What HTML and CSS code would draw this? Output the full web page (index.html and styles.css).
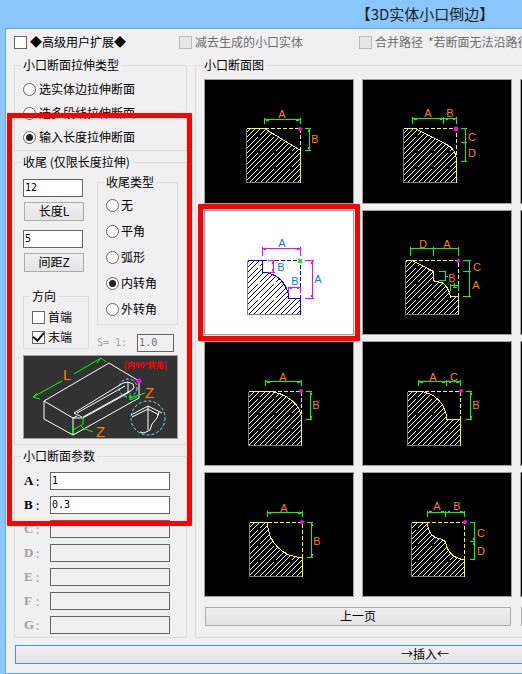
FILE: index.html
```
<!DOCTYPE html>
<html lang="zh-CN">
<head>
    <meta charset="UTF-8">
    <title>【3D实体小口倒边】</title>
    <link rel="stylesheet" href="styles.css">
</head>
<body>
<div class="dialog">
    <h1 class="title">【3D实体小口倒边】</h1>
    <main class="client">
        <div class="options">
            <label class="check"><input type="checkbox">◆高级用户扩展◆</label>
            <label class="check disabled"><input type="checkbox" disabled>减去生成的小口实体</label>
            <label class="check disabled"><input type="checkbox" disabled>合并路径</label>
            <span class="hint">*若断面无法沿路径</span>
        </div>

        <div class="columns">
            <div class="settings">
                <fieldset class="extrude">
                    <legend>小口断面拉伸类型</legend>
                    <label class="check"><input type="radio" name="extrude">选实体边拉伸断面</label>
                    <label class="check"><input type="radio" name="extrude">选多段线拉伸断面</label>
                    <label class="check"><input type="radio" name="extrude" checked>输入长度拉伸断面</label>
                </fieldset>

                <fieldset class="ending">
                    <legend>收尾 (仅限长度拉伸)</legend>
                    <div class="ending-row">
                        <div class="ending-left">
                            <input class="field" type="text" value="12" aria-label="长度L">
                            <button class="btn" type="button">长度L</button>
                            <input class="field second" type="text" value="5" aria-label="间距Z">
                            <button class="btn" type="button">间距Z</button>
                            <fieldset class="direction">
                                <legend>方向</legend>
                                <label class="check"><input type="checkbox">首端</label>
                                <label class="check"><input type="checkbox" checked>末端</label>
                            </fieldset>
                        </div>
                        <div class="ending-right">
                            <fieldset class="end-type">
                                <legend>收尾类型</legend>
                                <label class="check"><input type="radio" name="end">无</label>
                                <label class="check"><input type="radio" name="end">平角</label>
                                <label class="check"><input type="radio" name="end">弧形</label>
                                <label class="check"><input type="radio" name="end" checked>内转角</label>
                                <label class="check"><input type="radio" name="end">外转角</label>
                            </fieldset>
                            <div class="scale">
                                <label for="scale">S= 1:</label>
                                <input class="field" id="scale" type="text" value="1.0" disabled>
                            </div>
                        </div>
                    </div>
                    <svg class="preview" viewBox="0 0 155 84">
                        <g class="solid">
                            <path d="M21 46 86 8 116 26V43L50 80 21 64V46L50 63V80"/>
                            <path d="M50 63 60 63 105 38"/>
                            <path d="M51 58 100 28 105 27 110 29 111 33 105 38V27"/>
                            <path d="M51 58 59 62M54 58 102 31M60 62 107 36M50 63 54 61"/>
                            <path d="M108 60 125 51 139 58M109 62 125 54 136 60M125 51V75M136 57 134 63 129 69 127 75 121 78 117 77"/>
                        </g>
                        <g class="lens">
                            <circle cx="105" cy="33" r="9"/>
                            <circle cx="125" cy="63" r="17"/>
                        </g>
                        <g class="measure">
                            <path d="M10 42 39 26M51 19 78 3M10 42 17 44M10 42 14 38M78 3 83 7M78 3 74 8"/>
                            <path d="M107 38V45L114 42M107 43 122 38M50 75 60 69V62M50 70V79M60 73 70 77M58 71 62 75"/>
                        </g>
                        <g class="big-letters">
                            <text x="40" y="25">L</text>
                            <text x="122" y="43">Z</text>
                            <text x="73" y="82">Z</text>
                        </g>
                        <text class="caption" x="101" y="13">[内90°转角]</text>
                        <circle class="base" cx="116" cy="26" r="2.5"/>
                    </svg>
                </fieldset>

                <fieldset class="params">
                    <legend>小口断面参数</legend>
                    <div class="param"><label for="pa"><b>A</b>:</label><input class="field" id="pa" type="text" value="1"></div>
                    <div class="param"><label for="pb"><b>B</b>:</label><input class="field" id="pb" type="text" value="0.3"></div>
                    <div class="param disabled"><label for="pc"><b>C</b>:</label><input class="field" id="pc" type="text" disabled></div>
                    <div class="param disabled"><label for="pd"><b>D</b>:</label><input class="field" id="pd" type="text" disabled></div>
                    <div class="param disabled"><label for="pe"><b>E</b>:</label><input class="field" id="pe" type="text" disabled></div>
                    <div class="param disabled"><label for="pf"><b>F</b>:</label><input class="field" id="pf" type="text" disabled></div>
                    <div class="param disabled"><label for="pg"><b>G</b>:</label><input class="field" id="pg" type="text" disabled></div>
                </fieldset>
                <div class="mark mark-settings"></div>
            </div>

            <fieldset class="profiles">
                <legend>小口断面图</legend>
                <div class="grid">
                    <button class="cell" type="button" aria-label="倒角">
                        <svg viewBox="1 1 148 123">
                            <defs>
                                <pattern id="hatch" width="16" height="16" patternUnits="userSpaceOnUse">
                                    <path class="hatch-line" d="M-1 6 6 -1M-1 11 11 -1M-1 17 6 10M8 8 17 -1M4 17 17 4M9 17 17 9"/>
                                </pattern>
                                <pattern id="hatch-dark" width="16" height="16" patternUnits="userSpaceOnUse">
                                    <path class="hatch-line dark" d="M-1 6 6 -1M-1 11 11 -1M-1 17 6 10M8 8 17 -1M4 17 17 4M9 17 17 9"/>
                                </pattern>
                            </defs>
                            <path class="fill" d="M42.5 49.5H60.5L96.5 71.5V103.5H42.5Z"/>
                            <path class="side" d="M42.5 49.5V103.5H96.5"/>
                            <path class="edge" d="M42.5 49.5H60.5L96.5 71.5V103.5"/>
                            <path class="cut" d="M96.5 71.5V49.5H60.5"/>
                            <path class="measure" d="M60.5 39V45M96.5 39V45M60.5 40.5H96.5M101 49.5H107M101 71.5H107M105.5 49.5V71.5M62 41.5H65M92 41.5H95M104.5 51V53M104.5 68V70"/>
                            <text x="78" y="39">A</text>
                            <text x="111" y="64">B</text>
                            <circle class="base" cx="96" cy="50" r="2"/>
                        </svg>
                    </button>
                    <button class="cell" type="button" aria-label="斜边圆角">
                        <svg viewBox="1 1 148 123">
                            <path class="fill" d="M41.5 49.5H53L84 65Q94.5 70 94.5 82V103.5H41.5Z"/>
                            <path class="side" d="M41.5 49.5V103.5H94.5"/>
                            <path class="edge" d="M41.5 49.5H53L84 65Q94.5 70 94.5 82V103.5"/>
                            <path class="cut" d="M94.5 76V49.5H53"/>
                            <path class="measure" d="M50.5 38V45M81.5 38V45M94.5 38V45M50.5 39.5H94.5M99 49.5H105M99 63.5H105M99 82.5H105M103.5 49.5V82.5M52 40.5H55M78 40.5H80M84 40.5H86M91 40.5H93"/>
                            <text x="66" y="38">A</text>
                            <text x="88" y="38">B</text>
                            <text x="110" y="62">C</text>
                            <text x="110" y="78">D</text>
                            <rect class="base" x="92" y="48" width="4" height="4"/>
                        </svg>
                    </button>
                    <button class="cell" type="button"></button>
                    <button class="cell" type="button"></button>

                    <button class="cell selected" type="button" aria-label="凸圆双台阶">
                        <svg viewBox="1 1 148 123">
                            <path class="fill" d="M43.5 50.5H58.5V62.5A26 26 0 0 1 84.5 88.5H96.5V104.5H43.5Z"/>
                            <path class="side" d="M43.5 50.5V104.5H96.5"/>
                            <path class="edge" d="M43.5 50.5H58.5V62.5A26 26 0 0 1 84.5 88.5H96.5V104.5"/>
                            <path class="cut" d="M96.5 88.5V50.5H58.5"/>
                            <path class="measure" d="M58.5 37V46M96.5 37V46M58.5 38.5H96.5M101 50.5H110M101 88.5H110M108.5 50.5V88.5M64 50.5H71M64 62.5H71M69.5 50.5V62.5M84.5 77V83M96.5 77V83M84.5 77.5H96.5M60 39.5H62M93 39.5H95M107.5 52V54M107.5 85V87M68.5 52V54M68.5 59V61M86 78.5H88M93 78.5H95"/>
                            <text x="78" y="37">A</text>
                            <text x="77" y="61">B</text>
                            <text x="91" y="75">B</text>
                            <text x="114" y="73">A</text>
                            <rect class="base" x="94" y="49" width="4" height="4"/>
                        </svg>
                        <span class="mark mark-cell"></span>
                    </button>
                    <button class="cell" type="button" aria-label="斜边台阶圆角">
                        <svg viewBox="1 1 148 123">
                            <path class="fill" d="M43.5 50.5H50L71.5 61.5V70.5L81 73Q87 78 88.5 86.5H96.5V104.5H43.5Z"/>
                            <path class="side" d="M43.5 50.5V104.5H96.5"/>
                            <path class="edge" d="M43.5 50.5H50L71.5 61.5V70.5L81 73Q87 78 88.5 86.5H96.5V104.5"/>
                            <path class="cut" d="M96.5 86.5V50.5H50"/>
                            <path class="measure" d="M48.5 37V46M71.5 37V46M96.5 37V46M48.5 38.5H96.5M101 50.5H109M101 61.5H109M101 86.5H109M107.5 50.5V86.5M77 61.5H84M77 70.5H84M83.5 61.5V70.5M84 66.5H86M88.5 74V81M96.5 74V81M88.5 75.5H96.5M91 77.5H95M92.5 73V77"/>
                            <text x="61" y="38">D</text>
                            <text x="85" y="38">A</text>
                            <text x="90" y="72">B</text>
                            <text x="115" y="61">C</text>
                            <text x="114" y="79">A</text>
                            <circle class="base" cx="96" cy="51" r="2"/>
                        </svg>
                    </button>
                    <button class="cell" type="button"></button>
                    <button class="cell" type="button"></button>

                    <button class="cell" type="button" aria-label="外圆角">
                        <svg viewBox="1 1 148 123">
                            <path class="fill" d="M44.5 50.5H61.5A36 28 0 0 1 97.5 78.5V104.5H44.5Z"/>
                            <path class="side" d="M44.5 50.5V104.5H97.5"/>
                            <path class="edge" d="M44.5 50.5H61.5A36 28 0 0 1 97.5 78.5V104.5"/>
                            <path class="cut" d="M97.5 78.5V50.5H67"/>
                            <path class="measure" d="M61.5 39V45M97.5 39V45M61.5 40.5H97.5M102 50.5H108M102 78.5H108M106.5 50.5V78.5M63 41.5H66M93 41.5H96M107.5 52V54M107.5 75V77"/>
                            <text x="79" y="40">A</text>
                            <text x="112" y="68">B</text>
                            <circle class="base" cx="97" cy="50" r="2"/>
                        </svg>
                    </button>
                    <button class="cell" type="button" aria-label="圆角台阶">
                        <svg viewBox="1 1 148 123">
                            <path class="fill" d="M45.5 50.5H56.5A28 28 0 0 1 84.5 78.5H98.5V104.5H45.5Z"/>
                            <path class="side" d="M45.5 50.5V104.5H98.5"/>
                            <path class="edge" d="M45.5 50.5H56.5A28 28 0 0 1 84.5 78.5H98.5V104.5"/>
                            <path class="cut" d="M98.5 78.5V50.5H62"/>
                            <path class="measure" d="M56.5 39V45M84.5 39V45M98.5 39V45M56.5 40.5H98.5M104 50.5H110M104 78.5H110M108.5 50.5V78.5M58 41.5H61M80 41.5H83M87 41.5H89M94 41.5H97M109.5 52V54M109.5 75V77"/>
                            <text x="71" y="40">A</text>
                            <text x="92" y="40">C</text>
                            <text x="114" y="68">B</text>
                            <circle class="base" cx="99" cy="50" r="2"/>
                        </svg>
                    </button>
                    <button class="cell" type="button"></button>
                    <button class="cell" type="button"></button>

                    <button class="cell" type="button" aria-label="内圆角">
                        <svg viewBox="1 1 148 123">
                            <path class="fill" d="M45.5 50.5H63.5A35 35 0 0 0 98.5 85.5V104.5H45.5Z"/>
                            <path class="side" d="M45.5 50.5V104.5H98.5"/>
                            <path class="edge" d="M45.5 50.5H63.5A35 35 0 0 0 98.5 85.5V104.5"/>
                            <path class="cut" d="M98.5 85.5V50.5H63.5"/>
                            <path class="measure" d="M63.5 39V45M98.5 39V45M63.5 40.5H98.5M103 50.5H109M103 85.5H109M107.5 50.5V85.5M65 41.5H67M94 41.5H97M108.5 52V54M108.5 82V84"/>
                            <text x="80" y="40">A</text>
                            <text x="113" y="73">B</text>
                            <circle class="base" cx="98" cy="50" r="2"/>
                        </svg>
                    </button>
                    <button class="cell" type="button" aria-label="双内圆角">
                        <svg viewBox="1 1 148 123">
                            <path class="fill" d="M49.5 50.5H65.5Q66 65 79 67L83.5 69.5Q86 86 102.5 87.5V104.5H49.5Z"/>
                            <path class="side" d="M49.5 50.5V104.5H102.5"/>
                            <path class="edge" d="M49.5 50.5H65.5Q66 65 79 67L83.5 69.5Q86 86 102.5 87.5V104.5"/>
                            <path class="cut" d="M102.5 87.5V50.5H65.5"/>
                            <path class="measure" d="M65.5 39V45M83.5 39V45M102.5 39V45M65.5 40.5H102.5M108 50.5H113M108 69.5H113M108 87.5H113M112.5 50.5V87.5M67 39.5H70M79 39.5H82M86 39.5H88M98 39.5H101M111.5 66V68M111.5 71V73"/>
                            <text x="75" y="38">A</text>
                            <text x="95" y="38">B</text>
                            <text x="119" y="65">C</text>
                            <text x="119" y="83">D</text>
                            <circle class="base" cx="103" cy="50" r="2"/>
                        </svg>
                    </button>
                    <button class="cell" type="button"></button>
                    <button class="cell" type="button"></button>
                </div>
                <div class="pager">
                    <button class="btn" type="button">上一页</button>
                    <button class="btn" type="button">下一页</button>
                </div>
            </fieldset>
        </div>

        <button class="btn insert" type="submit">→插入←</button>
    </main>
</div>
</body>
</html>
```
FILE: styles.css
```
* {
    box-sizing: border-box;
}

html {
    overflow-x: hidden;
}

body {
    margin: 0;
    min-height: 100vh;
    overflow-x: hidden;
    background-color: #8ac6fb;
    font-family: "Noto Sans CJK SC", sans-serif;
    font-size: 12px;
    line-height: 14px;
    color: #000;
}

.dialog {
    min-width: 850px;
    padding: 0 5px;
}

.title {
    margin: 0;
    font-size: 15px;
    font-weight: normal;
    line-height: 28px;
    text-align: center;
    color: #222;
}

.client {
    display: flex;
    flex-direction: column;
    padding: 5px 8px 9px;
    background-color: #f0f0f0;
    border: 1px solid #6ca6da;
}

/* Checkboxes and radios */
.check {
    display: flex;
    align-items: center;
    gap: 3px;
    white-space: nowrap;
}

.check input {
    appearance: none;
    flex: none;
    display: grid;
    place-items: center;
    width: 13px;
    height: 13px;
    margin: 0;
    background-color: #fff;
    border: 1px solid #666;
}

.check input[type="radio"] {
    border-radius: 50%;
}

.check input[type="radio"]:checked::before {
    content: "";
    width: 7px;
    height: 7px;
    border-radius: 50%;
    background-color: #222;
}

.check input[type="checkbox"]:checked::before {
    content: "";
    width: 9px;
    height: 5px;
    margin-bottom: 3px;
    border: solid #111;
    border-width: 0 0 2px 2px;
    transform: rotate(-50deg);
}

.check input:disabled {
    background-color: #e6e6e6;
    border-color: #bcbcbc;
}

.disabled,
.hint {
    color: #6d6d6d;
}

.options {
    display: grid;
    grid-template-columns: 165px 180px auto 1fr;
    align-items: center;
    height: 16px;
    margin-bottom: 8px;
}

.hint {
    margin-left: 5px;
    white-space: nowrap;
}

/* Group boxes */
fieldset {
    min-width: 0;
    margin: 0;
    padding: 0 8px;
    border: 1px solid #dcdcdc;
}

legend {
    padding: 0 2px;
    margin-left: -2px;
    white-space: nowrap;
}

.columns {
    display: flex;
    gap: 8px;
}

.settings {
    position: relative;
    flex: none;
    display: flex;
    flex-direction: column;
    gap: 4px;
    width: 173px;
}

.extrude {
    padding-top: 5px;
    padding-bottom: 1px;
}

.extrude .check {
    height: 24px;
}

.ending {
    padding-top: 6px;
    padding-bottom: 5px;
}

.ending-row {
    display: flex;
    gap: 8px;
}

.ending-left {
    flex: none;
    display: flex;
    flex-direction: column;
    width: 66px;
    padding-top: 4px;
}

.ending-right {
    flex: 1;
    min-width: 0;
}

.ending-left .field {
    width: 60px;
    margin-bottom: 5px;
}

.ending-left .second {
    margin-top: 9px;
}

.ending-left .btn {
    width: 60px;
    margin-left: 1px;
}

.direction {
    margin-top: 17px;
    padding-top: 4px;
    padding-bottom: 1px;
}

.direction .check {
    height: 20px;
}

.end-type {
    padding-top: 3px;
    padding-bottom: 2px;
}

.end-type .check {
    height: 26px;
    gap: 2px;
}

.scale {
    display: flex;
    align-items: center;
    gap: 10px;
    margin: 9px 4px 3px 0;
    font-family: "DejaVu Sans Mono", monospace;
    font-size: 10px;
    color: #a0a0a0;
    white-space: nowrap;
}

.scale .field {
    flex: 1;
}

/* Fields and buttons */
.field {
    min-width: 0;
    height: 18px;
    padding: 0 2px 2px 1px;
    background-color: #fff;
    border: 1px solid #646464;
    border-radius: 0;
    font-family: "DejaVu Sans Mono", monospace;
    font-size: 10px;
    color: #000;
}

.field:disabled {
    background-color: #f0f0f0;
    color: #6d6d6d;
}

.btn {
    height: 19px;
    padding: 0 0 2px;
    background: linear-gradient(#f0f0f0, #e3e3e3);
    border: 1px solid #acacac;
    font-family: inherit;
    font-size: 12px;
    line-height: 14px;
    color: #000;
}

.insert {
    margin: 7px 1px 0;
    border-color: #3c96f0;
}

.params {
    padding-top: 6px;
}

.param {
    display: flex;
    align-items: center;
    height: 24px;
}

.param label {
    display: flex;
    width: 27px;
    padding-left: 1px;
}

.param b {
    width: 12px;
    font-family: "Liberation Serif", serif;
    font-size: 13px;
}

.param.disabled {
    color: #a0a0a0;
}

.param .field {
    width: 120px;
}

/* Section drawings */
.profiles {
    flex: 1;
    padding: 7px 7px 0 8px;
}

.grid {
    display: grid;
    grid-template-columns: repeat(4, 1fr);
    gap: 6px 8px;
}

.cell {
    position: relative;
    height: 125px;
    padding: 0;
    background-color: #000;
    border: 1px solid #a0a0a0;
}

.cell svg {
    display: block;
    width: 100%;
    height: 100%;
}

.cell path {
    fill: none;
    stroke-width: 1;
    shape-rendering: crispEdges;
}

.cell text {
    font-family: "Liberation Sans", sans-serif;
    font-size: 11px;
    text-anchor: middle;
    fill: #ff7f00;
}

.cell .fill {
    fill: url(#hatch);
}

.cell .hatch-line {
    stroke: #fff;
}

.cell .side {
    stroke: #808080;
}

.cell .edge,
.cell .cut {
    stroke: #ff0;
}

.cell .cut {
    stroke-dasharray: 4 2;
}

.measure {
    fill: none;
    stroke: #0f0;
}

.base {
    fill: #f0f;
}

.selected {
    background-color: #fff;
}

.selected .fill {
    fill: url(#hatch-dark);
}

.cell .hatch-line.dark {
    stroke: #000;
}

.selected .edge,
.selected .cut {
    stroke: #00f;
}

.selected .measure {
    stroke: #f0f;
}

.selected .base {
    fill: #0f0;
}

.selected text {
    fill: #0080ff;
}

.preview {
    display: block;
    width: 100%;
    background-color: #323232;
    outline: 1px solid #a0a0a0;
    outline-offset: -1px;
}

.solid,
.lens {
    fill: none;
    stroke: #fff;
}

.lens {
    stroke: #7fdfff;
    stroke-dasharray: 3 2;
}

.big-letters {
    font-family: "Liberation Sans", sans-serif;
    font-size: 15px;
    fill: #ff7f00;
}

.caption {
    font-size: 8px;
    font-weight: bold;
    fill: #f00;
}

.pager {
    display: flex;
    gap: 10px;
    margin: 10px 1px 0;
}

.pager .btn {
    flex: 1;
}

/* Red highlight frames */
.mark {
    position: absolute;
    border: 5px solid #f00;
    border-radius: 1px;
    pointer-events: none;
}

.mark-settings {
    top: 55px;
    bottom: 112px;
    left: -7px;
    right: -5px;
}

.mark-cell {
    inset: -7px;
}
```
